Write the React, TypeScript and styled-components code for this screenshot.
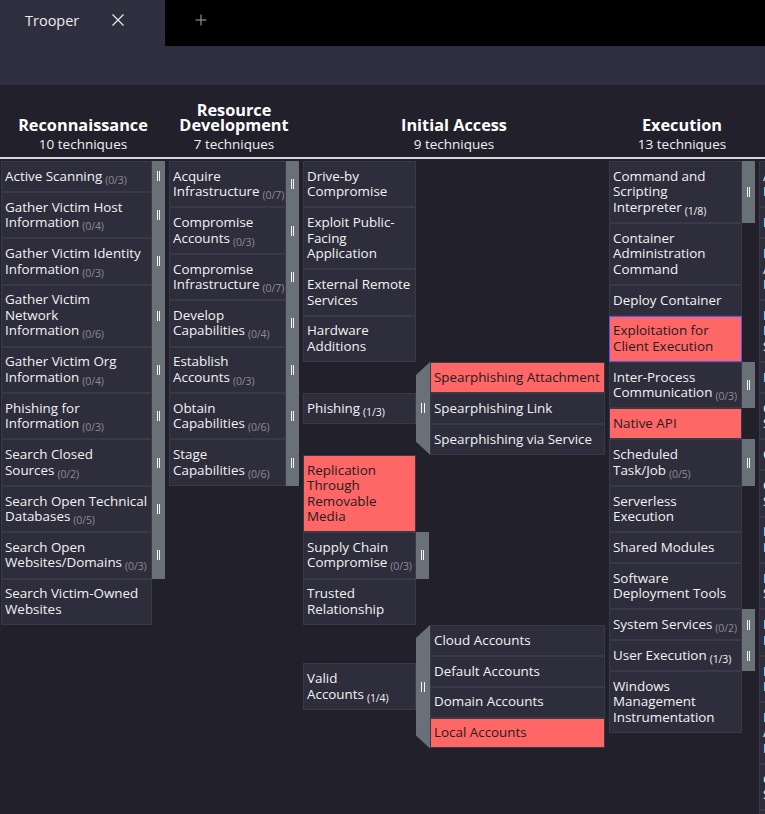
import React from 'react';
import styled, { createGlobalStyle } from 'styled-components';

interface Technique {
  lines: string[];
  count?: string;
  selected?: boolean;
  focused?: boolean;
  hasSubs?: boolean;
  subs?: Technique[];
}

interface Tactic {
  name: string;
  cellWidth: number;
  subWidth?: number;
  techniques: Technique[];
}

const GlobalStyle = createGlobalStyle`
  html, body {
    margin: 0;
    padding: 0;
    overflow: hidden;
    background: #22212b;
  }
  body {
    font-family: "Open Sans", "Noto Sans", sans-serif;
    color: #f2f2f2;
  }
`;

const Page = styled.div`
  min-height: 814px;
  background: #22212b;
`;

const TabStrip = styled.div`
  display: flex;
  align-items: center;
  height: 46px;
  background: #000;
`;

const Tab = styled.div`
  box-sizing: border-box;
  width: 165px;
  height: 46px;
  padding: 0 41px 6px 25px;
  display: flex;
  align-items: center;
  justify-content: space-between;
  background: #2f2e3e;
`;

const TabTitle = styled.span`
  font-size: 14.5px;
  color: #ececec;
`;

const IconButton = styled.span`
  display: flex;
  align-items: center;
  justify-content: center;
  color: ${p => p.color || '#e6e6e6'};
`;

const NewTabButton = styled(IconButton)`
  margin: 0 0 6px 30px;
`;

const Toolbar = styled.div`
  height: 39px;
  background: #2f2e3e;
`;

const HeaderRow = styled.div`
  display: flex;
  gap: 4px;
  padding-left: 1px;
  border-bottom: 2px solid #d6d6dc;
`;

const TacticHeader = styled.div<{ $width: number }>`
  box-sizing: border-box;
  flex: none;
  width: ${p => p.$width}px;
  height: 72px;
  padding-bottom: 4px;
  display: flex;
  flex-direction: column;
  justify-content: flex-end;
  align-items: center;
  text-align: center;
`;

const TacticTitle = styled.div`
  font-size: 16.3px;
  font-weight: 700;
  line-height: 15px;
  color: #fff;
`;

const TacticCount = styled.div`
  margin-top: 3px;
  font-size: 13.5px;
  line-height: 17px;
  color: #f0f0f0;
`;

const Body = styled.div`
  display: flex;
  align-items: flex-start;
  gap: 4px;
  padding: 2px 0 0 1px;
`;

const TacticColumn = styled.div<{ $width: number }>`
  flex: none;
  width: ${p => p.$width}px;
  display: flex;
  flex-direction: column;
  align-items: flex-start;
`;

const Row = styled.div`
  display: flex;
`;

const Cell = styled.div<{ $width: number; $selected?: boolean; $focused?: boolean }>`
  box-sizing: border-box;
  flex: none;
  width: ${p => p.$width}px;
  padding: 6.8px 2px 6.6px 3px;
  border: 1px solid ${p => (p.$focused ? '#5353f2' : '#3a3948')};
  background: ${p => (p.$selected ? '#ff6666' : '#2e2d3c')};
  color: ${p => (p.$selected ? '#1d1c22' : '#f2f2f2')};
  font-size: 13.4px;
  line-height: 15.5px;
  white-space: nowrap;
  overflow: hidden;
`;

const ParentCell = styled(Cell)`
  align-self: center;
`;

const Count = styled.span<{ $active: boolean }>`
  position: relative;
  top: 3px;
  margin-left: 3px;
  font-size: 10.5px;
  line-height: 1;
  letter-spacing: -0.1px;
  color: ${p => (p.$active ? '#f2f2f2' : '#8c8c97')};
`;

const Handle = styled.div`
  flex: none;
  width: 13px;
  background: #6a7077;
  display: flex;
  align-items: center;
  justify-content: center;
`;

const SubHandle = styled(Handle)`
  width: 14px;
  clip-path: polygon(0 13px, 100% 0, 100% 100%, 0 calc(100% - 13px));
`;

const Grip = styled.span`
  width: 1.5px;
  height: 10px;
  border-left: 1.5px solid #f4f4f6;
  border-right: 1.5px solid #f4f4f6;
`;

const SubList = styled.div`
  display: flex;
  flex-direction: column;
`;

const t = (lines: string[], extra: Partial<Technique> = {}): Technique => ({ lines, ...extra });
const s = (lines: string[], count: string, extra: Partial<Technique> = {}): Technique => ({
  lines,
  count,
  hasSubs: true,
  ...extra,
});

const tactics: Tactic[] = [
  {
    name: 'Reconnaissance',
    cellWidth: 151,
    techniques: [
      s(['Active Scanning'], '0/3'),
      s(['Gather Victim Host', 'Information'], '0/4'),
      s(['Gather Victim Identity', 'Information'], '0/3'),
      s(['Gather Victim', 'Network', 'Information'], '0/6'),
      s(['Gather Victim Org', 'Information'], '0/4'),
      s(['Phishing for', 'Information'], '0/3'),
      s(['Search Closed', 'Sources'], '0/2'),
      s(['Search Open Technical', 'Databases'], '0/5'),
      s(['Search Open', 'Websites/Domains'], '0/3'),
      t(['Search Victim-Owned', 'Websites']),
    ],
  },
  {
    name: 'Resource Development',
    cellWidth: 117,
    techniques: [
      s(['Acquire', 'Infrastructure'], '0/7'),
      s(['Compromise', 'Accounts'], '0/3'),
      s(['Compromise', 'Infrastructure'], '0/7'),
      s(['Develop', 'Capabilities'], '0/4'),
      s(['Establish', 'Accounts'], '0/3'),
      s(['Obtain', 'Capabilities'], '0/6'),
      s(['Stage', 'Capabilities'], '0/6'),
    ],
  },
  {
    name: 'Initial Access',
    cellWidth: 113,
    subWidth: 175,
    techniques: [
      t(['Drive-by', 'Compromise']),
      t(['Exploit Public-', 'Facing', 'Application']),
      t(['External Remote', 'Services']),
      t(['Hardware', 'Additions']),
      s(['Phishing'], '1/3', {
        subs: [
          t(['Spearphishing Attachment'], { selected: true }),
          t(['Spearphishing Link']),
          t(['Spearphishing via Service']),
        ],
      }),
      t(['Replication', 'Through', 'Removable', 'Media'], { selected: true }),
      s(['Supply Chain', 'Compromise'], '0/3'),
      t(['Trusted', 'Relationship']),
      s(['Valid', 'Accounts'], '1/4', {
        subs: [
          t(['Cloud Accounts']),
          t(['Default Accounts']),
          t(['Domain Accounts']),
          t(['Local Accounts'], { selected: true }),
        ],
      }),
    ],
  },
  {
    name: 'Execution',
    cellWidth: 133,
    techniques: [
      s(['Command and', 'Scripting', 'Interpreter'], '1/8'),
      t(['Container', 'Administration', 'Command']),
      t(['Deploy Container']),
      t(['Exploitation for', 'Client Execution'], { selected: true, focused: true }),
      s(['Inter-Process', 'Communication'], '0/3'),
      t(['Native API'], { selected: true }),
      s(['Scheduled', 'Task/Job'], '0/5'),
      t(['Serverless', 'Execution']),
      t(['Shared Modules']),
      t(['Software', 'Deployment Tools']),
      s(['System Services'], '0/2'),
      s(['User Execution'], '1/3'),
      t(['Windows', 'Management', 'Instrumentation']),
    ],
  },
  {
    name: 'Persistence',
    cellWidth: 141,
    techniques: [
      s(['Account', 'Manipulation'], '0/6'),
      t(['BITS Jobs']),
      s(['Boot or Logon', 'Autostart', 'Execution'], '0/14'),
      s(['Boot or Logon', 'Initialization', 'Scripts'], '0/5'),
      t(['Browser Extensions']),
      t(['Compromise Client', 'Software Binary']),
      s(['Create Account'], '0/3'),
      s(['Create or Modify', 'System Process'], '0/4'),
      s(['Event Triggered', 'Execution'], '0/16'),
      t(['External Remote', 'Services']),
      s(['Hijack Execution', 'Flow'], '0/12'),
      t(['Implant Internal', 'Image']),
      s(['Modify', 'Authentication', 'Process'], '0/8'),
      s(['Office Application', 'Startup'], '0/6'),
      s(['Pre-OS Boot'], '0/5'),
    ],
  },
];

const CloseIcon = () => (
  <svg width="12" height="12" viewBox="0 0 12 12" fill="none" stroke="currentColor" strokeWidth="1.3">
    <line x1="0.5" y1="0.5" x2="11.5" y2="11.5" />
    <line x1="11.5" y1="0.5" x2="0.5" y2="11.5" />
  </svg>
);

const PlusIcon = () => (
  <svg width="12" height="12" viewBox="0 0 12 12" fill="none" stroke="currentColor" strokeWidth="1.2">
    <line x1="6" y1="0.5" x2="6" y2="11.5" />
    <line x1="0.5" y1="6" x2="11.5" y2="6" />
  </svg>
);

const CellText: React.FC<{ tech: Technique }> = ({ tech }) => (
  <>
    {tech.lines.map((line, i) => (
      <React.Fragment key={i}>
        {i > 0 && <br />}
        {line}
      </React.Fragment>
    ))}
    {tech.count && <Count $active={!tech.count.startsWith('0/')}>({tech.count})</Count>}
  </>
);

const TechniqueRow: React.FC<{ tech: Technique; tactic: Tactic }> = ({ tech, tactic }) => {
  if (tech.subs) {
    return (
      <Row>
        <ParentCell $width={tactic.cellWidth} $selected={tech.selected}>
          <CellText tech={tech} />
        </ParentCell>
        <SubHandle>
          <Grip />
        </SubHandle>
        <SubList>
          {tech.subs.map((sub, i) => (
            <Cell key={i} $width={tactic.subWidth || 175} $selected={sub.selected}>
              <CellText tech={sub} />
            </Cell>
          ))}
        </SubList>
      </Row>
    );
  }

  return (
    <Row>
      <Cell $width={tactic.cellWidth} $selected={tech.selected} $focused={tech.focused}>
        <CellText tech={tech} />
      </Cell>
      {tech.hasSubs && (
        <Handle>
          <Grip />
        </Handle>
      )}
    </Row>
  );
};

const columnWidth = (tactic: Tactic) =>
  tactic.cellWidth + (tactic.subWidth ? 14 + tactic.subWidth : 13);

const App: React.FC = () => (
  <Page>
    <GlobalStyle />
    <TabStrip>
      <Tab>
        <TabTitle>Trooper</TabTitle>
        <IconButton>
          <CloseIcon />
        </IconButton>
      </Tab>
      <NewTabButton color="#8f8f96">
        <PlusIcon />
      </NewTabButton>
    </TabStrip>
    <Toolbar />

    <HeaderRow>
      {tactics.map(tactic => (
        <TacticHeader key={tactic.name} $width={columnWidth(tactic)}>
          <TacticTitle>{tactic.name}</TacticTitle>
          <TacticCount>{tactic.techniques.length} techniques</TacticCount>
        </TacticHeader>
      ))}
    </HeaderRow>

    <Body>
      {tactics.map(tactic => (
        <TacticColumn key={tactic.name} $width={columnWidth(tactic)}>
          {tactic.techniques.map((tech, i) => (
            <TechniqueRow key={i} tech={tech} tactic={tactic} />
          ))}
        </TacticColumn>
      ))}
    </Body>
  </Page>
);

export default App;
